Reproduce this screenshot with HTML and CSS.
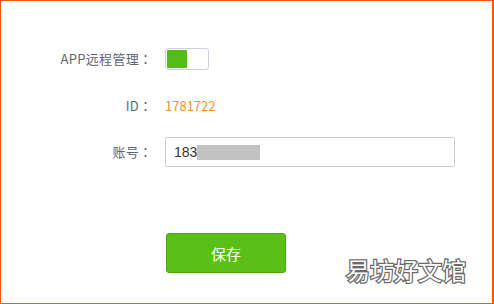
FILE: index.html
```html
<!DOCTYPE html>
<html lang="zh-CN">
<head>
<meta charset="utf-8">
<link rel="stylesheet" href="styles.css">
</head>
<body>
<div class="panel">
  <div class="row row-switch">
    <div class="label">APP远程管理<span class="colon" lang="zh-TW">：</span></div>
    <div class="switch"><span class="knob-on"></span></div>
  </div>
  <div class="row row-id">
    <div class="label">ID<span class="colon" lang="zh-TW">：</span></div>
    <div class="value">1781722</div>
  </div>
  <div class="row row-account">
    <div class="label">账号<span class="colon" lang="zh-TW">：</span></div>
    <div class="input"><span class="typed">183</span><span class="mask"></span></div>
  </div>
  <div class="row row-save">
    <div class="label"></div>
    <button class="save">保存</button>
  </div>
  <div class="watermark">易坊好文馆</div>
</div>
</body>
</html>
```

FILE: styles.css
```css
html, body {
  margin: 0;
  padding: 0;
  background: #fff;
}
.panel {
  position: relative;
  box-sizing: border-box;
  width: 494px;
  height: 304px;
  border: 1px solid #f5570d;
  border-right-width: 2px;
  padding-top: 47px;
  font-family: "Noto Sans CJK SC", "Microsoft YaHei", sans-serif;
  font-size: 13px;
  color: #5e6573;
}
.row {
  display: flex;
  align-items: center;
}
.label {
  width: 151px;
  flex: none;
  text-align: right;
  margin-right: 13px;
  line-height: 22px;
  letter-spacing: 0.3px;
}
.colon {
  font-family: "Noto Sans CJK TC", "Noto Sans CJK JP", sans-serif;
  letter-spacing: 0;
}
.row-switch { height: 22px; }
.row-id { height: 22px; margin-top: 25px; }
.row-account { margin-top: 20px; }
.row-save { margin-top: 66px; }
.switch {
  box-sizing: border-box;
  width: 44px;
  height: 22px;
  border: 1px solid #c8d2de;
  border-radius: 3px;
  background: #fff;
  padding: 1px;
  display: flex;
}
.knob-on {
  width: 20px;
  height: 18px;
  background: #52be15;
  border-radius: 1px;
}
.value {
  color: #f7931e;
  font-size: 13px;
  line-height: 22px;
}
.input {
  box-sizing: border-box;
  width: 290px;
  height: 30px;
  border: 1px solid #cfcfcf;
  border-radius: 2px;
  display: flex;
  align-items: center;
  padding-left: 8px;
  color: #333;
  font-family: "Liberation Sans", Arial, sans-serif;
  font-size: 14px;
}
.mask {
  display: inline-block;
  width: 63px;
  height: 15px;
  background: #c2c2c2;
}
.save {
  box-sizing: border-box;
  width: 120px;
  height: 40px;
  margin-left: 1px;
  border: 1px solid #4aa611;
  border-radius: 3px;
  background: #5abf16;
  color: #fff;
  font-family: "Noto Sans CJK SC", sans-serif;
  font-size: 15px;
  padding: 0;
}
.watermark {
  position: absolute;
  left: 345px;
  top: 252px;
  font-family: "Noto Sans CJK SC", sans-serif;
  font-size: 24px;
  line-height: 34px;
  color: #fff;
  -webkit-text-stroke: 2.5px #6a6a6a;
  paint-order: stroke fill;
}
```
